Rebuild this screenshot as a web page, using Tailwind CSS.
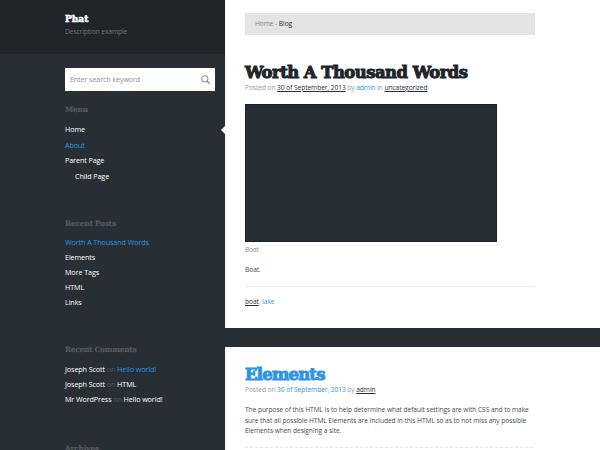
<!DOCTYPE html>
<html lang="en">
<head>
<meta charset="utf-8">
<title>Phat</title>
<script src="https://cdn.jsdelivr.net/npm/@tailwindcss/browser@4"></script>
</head>
<body class="w-[600px] h-[450px] overflow-hidden bg-[#272e34] font-['Open_Sans',sans-serif] text-[7.2px] tracking-[-0.1px] leading-[10px]">
<div class="flex w-[600px] h-[450px] overflow-hidden">
  <aside class="relative w-[225px] shrink-0 h-[450px] overflow-hidden text-white">
    <header class="h-[54px] bg-[#202529] border-b border-[#1c2125] pl-[65px] pt-[13px]">
      <h1 class="font-['DejaVu_Serif',serif] font-bold text-[9px] leading-[12px] tracking-[0] [-webkit-text-stroke:0.5px_white]">Phat</h1>
      <p class="mt-[2px] text-[6.7px] tracking-[-0.1px] text-[#73787b]">Description example</p>
    </header>
    <div class="pl-[65px] pt-[14px]">
      <form class="flex items-center justify-between w-[150px] h-[23px] bg-white pl-[5px] pr-[5px] text-[7px] text-[#8e8e8e]">
        <span class="pt-px tracking-[-0.03px]">Enter search keyword</span>
        <svg class="size-[9px] mb-px" viewBox="0 0 9 9" fill="none" stroke="#85888a" stroke-width="1"><circle cx="3.8" cy="3.8" r="3.2"/><path d="M6 6l2.6 2.6" stroke-width="1.3"/></svg>
      </form>
      <h2 class="mt-[12px] h-[12px] font-['DejaVu_Serif',serif] font-bold text-[7.4px] leading-[14px] tracking-[-0.2px] [-webkit-text-stroke:0.2px_#555b5f] text-[#555b5f]">Menu</h2>
      <ul class="mt-[7px] leading-[15.7px]">
        <li>Home</li>
        <li class="text-[#2d95e3]">About</li>
        <li>Parent Page</li>
        <li class="pl-[10px]">Child Page</li>
      </ul>
      <h2 class="mt-[32px] h-[12px] font-['DejaVu_Serif',serif] font-bold text-[7.4px] leading-[14px] tracking-[-0.2px] [-webkit-text-stroke:0.2px_#555b5f] text-[#555b5f]">Recent Posts</h2>
      <ul class="mt-[6px] leading-[15px]">
        <li class="text-[#2d95e3]">Worth A Thousand Words</li>
        <li>Elements</li>
        <li>More Tags</li>
        <li>HTML</li>
        <li>Links</li>
      </ul>
      <h2 class="mt-[33px] h-[12px] font-['DejaVu_Serif',serif] font-bold text-[7.4px] leading-[14px] tracking-[-0.28px] [-webkit-text-stroke:0.2px_#555b5f] text-[#555b5f]">Recent Comments</h2>
      <ul class="mt-[7px] leading-[15px] text-[#555b5f]">
        <li><span class="text-white">Joseph Scott</span> on <span class="text-[#2d95e3]">Hello world!</span></li>
        <li><span class="text-white">Joseph Scott</span> on <span class="text-white">HTML</span></li>
        <li><span class="text-white">Mr WordPress</span> on <span class="text-white">Hello world!</span></li>
      </ul>
      <h2 class="mt-[35px] h-[12px] font-['DejaVu_Serif',serif] font-bold text-[7.4px] leading-[14px] tracking-[-0.2px] [-webkit-text-stroke:0.2px_#555b5f] text-[#555b5f]">Archives</h2>
    </div>
    <svg class="absolute right-0 top-[126px] w-[4px] h-[8px]" viewBox="0 0 4 8"><path d="M4 0v8L0 4z" fill="white"/></svg>
  </aside>
  <main class="w-[375px] shrink-0 text-[6.6px] tracking-[-0.05px]">
    <article class="h-[328px] bg-white border-l border-[#f1f1f1] pl-[19px] pt-[13px]">
      <nav class="w-[290px] h-[22px] bg-[#e4e4e4] pl-[10px] leading-[22px] text-[#858585]">Home - <span class="text-[#272e34]">Blog</span></nav>
      <h2 class="mt-[26px] h-[21px] whitespace-nowrap font-['DejaVu_Serif',serif] font-bold text-[16.4px] leading-[24px] tracking-[-0.5px] text-[#202529] [-webkit-text-stroke:1px_#202529]">Worth A Thousand Words</h2>
      <p class="pt-px text-[#999]">Posted on <a class="text-[#272e34] underline">30 of September, 2013</a> by <a class="text-[#2d95e3]">admin</a> in <a class="text-[#272e34] underline">uncategorized</a></p>
      <figure class="mt-[11px]">
        <div class="w-[252px] h-[138px] bg-[#272e34] border border-[#1c2125]"></div>
        <figcaption class="mt-[3px] italic text-[#858585]">Boat.</figcaption>
      </figure>
      <p class="mt-[10px] text-[#454c52]">Boat.</p>
      <p class="mt-[11px] w-[290px] border-t border-[#ececec] pt-[10px] text-[#999]"><a class="text-[#272e34] underline">boat</a>, <a class="text-[#2d95e3]">lake</a></p>
    </article>
    <article class="mt-[19px] h-[103px] bg-white border-l border-[#f1f1f1] pl-[19px] pt-[16px]">
      <h2 class="h-[21px] font-['DejaVu_Serif',serif] font-bold text-[16.4px] leading-[24px] tracking-[-0.75px] text-[#2d95e3] [-webkit-text-stroke:1px_#2d95e3]">Elements</h2>
      <p class="pt-px text-[#999]">Posted on <a class="text-[#2d95e3]">30 of September, 2013</a> by <a class="text-[#272e34] underline">admin</a></p>
      <p class="mt-[10px] leading-[10.5px] whitespace-nowrap text-[#454c52]">The purpose of this HTML is to help determine what default settings are with CSS and to make<br>sure that all possible HTML Elements are included in this HTML so as to not miss any possible<br>Elements when designing a site.</p>
      <div class="mt-[10px] w-[288px] border-t border-dashed border-[#e4e4e4]"></div>
    </article>
  </main>
</div>
</body>
</html>
